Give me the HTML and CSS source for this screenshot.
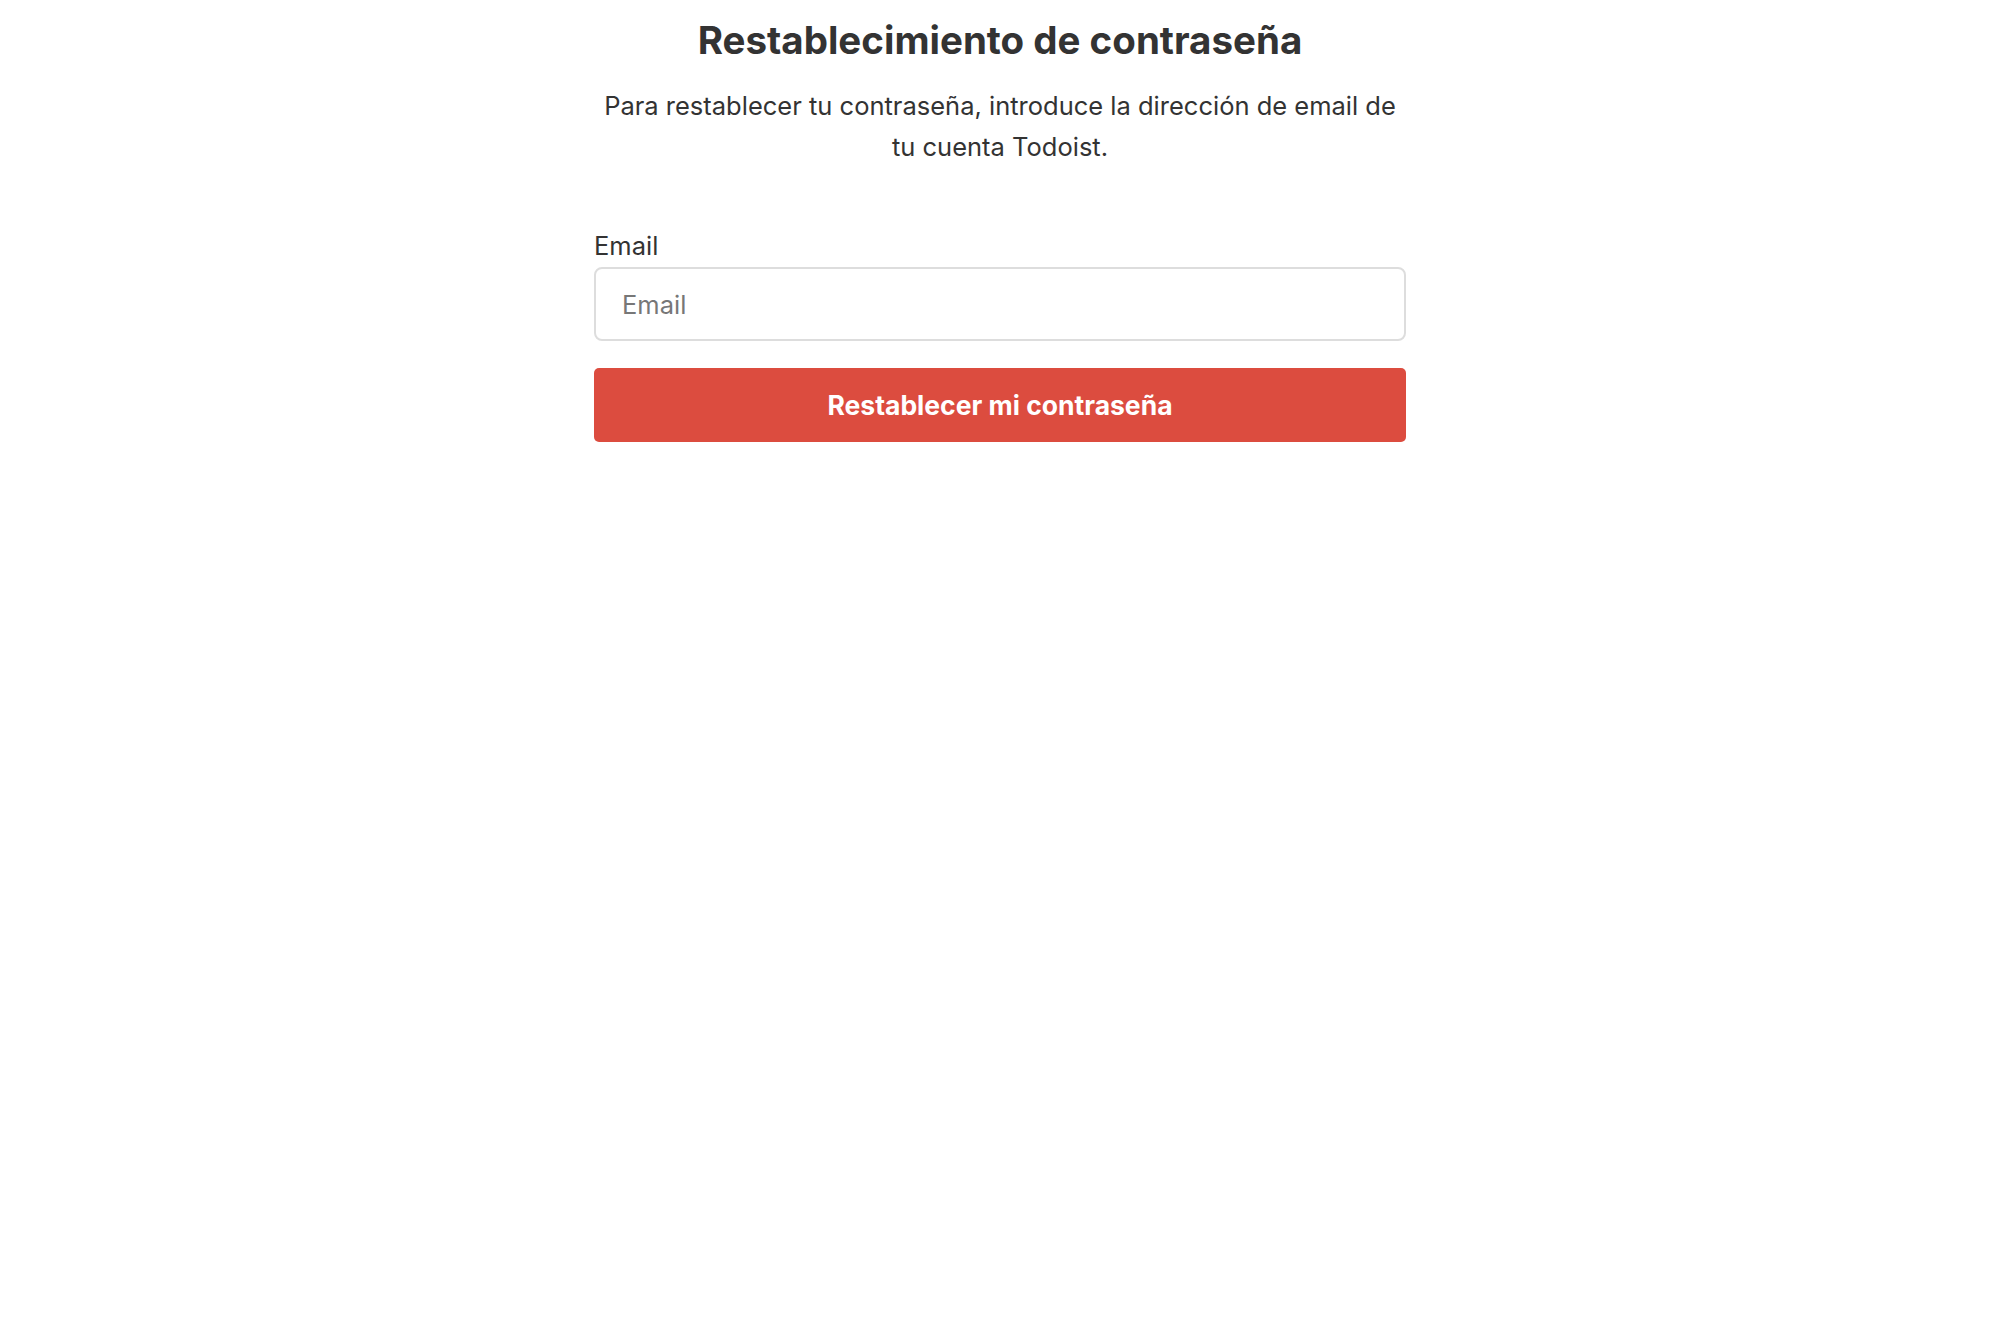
FILE: index.html
```html
<!DOCTYPE html>
<html lang="es">
<head>
<meta charset="utf-8">
<title>Restablecimiento de contraseña</title>
<link rel="stylesheet" href="styles.css">
</head>
<body>
<main class="page">
  <h1 class="title">Restablecimiento de contraseña</h1>
  <p class="intro">Para restablecer tu contraseña, introduce la dirección de email de tu cuenta Todoist.</p>
  <form class="form">
    <label class="label" for="email">Email</label>
    <input class="input" id="email" type="email" placeholder="Email">
    <button class="button" type="button">Restablecer mi contraseña</button>
  </form>
</main>
</body>
</html>
```
FILE: styles.css
```css
html, body {
  margin: 0;
  padding: 0;
  background: #fff;
}
body {
  font-family: Inter, "Noto Sans", "Liberation Sans", sans-serif;
  color: #333;
}
.page {
  width: 812px;
  margin: 0 auto;
  display: flex;
  flex-direction: column;
}
.title {
  margin: 16px 0 0;
  font-size: 38.5px;
  line-height: 48px;
  font-weight: 700;
  text-align: center;
  color: #333;
}
.intro {
  margin: 21px 0 0;
  font-size: 25.5px;
  line-height: 41px;
  text-align: center;
  color: #333;
}
.form {
  display: flex;
  flex-direction: column;
  margin-top: 64px;
}
.label {
  font-size: 25.5px;
  line-height: 30px;
  color: #333;
}
.input {
  box-sizing: border-box;
  height: 74px;
  margin-top: 6px;
  padding: 0 26px;
  border: 2px solid #ddd;
  border-radius: 8px;
  font-family: inherit;
  font-size: 25.5px;
  color: #333;
  outline: none;
}
.input::placeholder {
  color: #777;
}
.button {
  box-sizing: border-box;
  height: 74px;
  margin-top: 27px;
  border: none;
  border-radius: 5px;
  background: #dc4c3f;
  color: #fff;
  font-family: inherit;
  font-size: 26.5px;
  font-weight: 700;
  cursor: pointer;
}
```
